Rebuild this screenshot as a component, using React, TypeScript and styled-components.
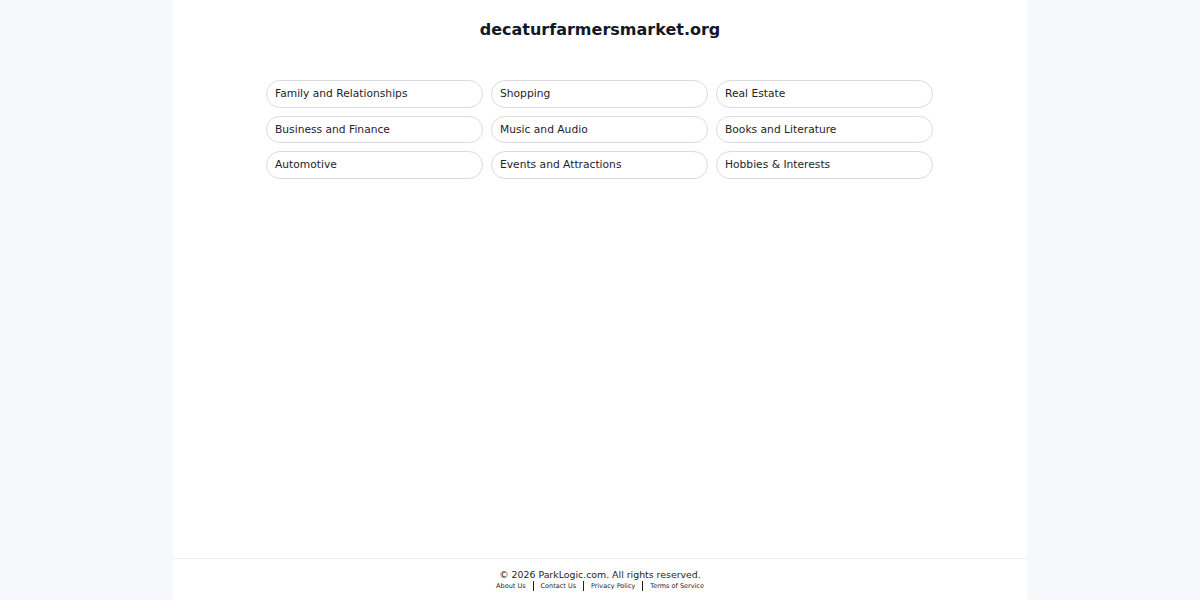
import React from "react";
import styled, { createGlobalStyle } from "styled-components";

const GlobalStyle = createGlobalStyle`
  html, body {
    margin: 0;
    padding: 0;
    background: #f7f8fc;
    font-family: "DejaVu Sans", "Liberation Sans", sans-serif;
    color: #111827;
  }
`;

const Page = styled.div`
  max-width: 854px;
  margin: 0 auto;
  min-height: 600px;
  background: #ffffff;
  display: flex;
  flex-direction: column;
`;

const Main = styled.main`
  flex: 1;
  display: flex;
  flex-direction: column;
  align-items: center;
`;

const Title = styled.h1`
  margin: 20px 0 0;
  font-size: 16px;
  line-height: 20px;
  font-weight: 700;
  color: #111827;
`;

const Grid = styled.div`
  align-self: flex-start;
  margin: 40px 0 0 93px;
  width: 667px;
  display: grid;
  grid-template-columns: repeat(3, 1fr);
  gap: 8px;
`;

const Chip = styled.a`
  display: flex;
  align-items: center;
  height: 27.5px;
  box-sizing: border-box;
  padding: 0 8px;
  border: 1px solid #d9dbe0;
  border-radius: 14px;
  font-size: 10.7px;
  color: #1f2328;
  text-decoration: none;
  cursor: pointer;
`;

const Footer = styled.footer`
  border-top: 1px solid #eceef1;
  padding: 10px 0 9px;
  display: flex;
  flex-direction: column;
  align-items: center;
`;

const Copy = styled.div`
  font-size: 9.4px;
  line-height: 12px;
  color: #1f2328;
`;

const Links = styled.nav`
  display: flex;
  align-items: center;
`;

const FooterLink = styled.a<{ $first?: boolean }>`
  font-size: 6.5px;
  line-height: 10px;
  color: #1f2328;
  text-decoration: none;
  padding: 0 7px;
  border-left: ${(p) => (p.$first ? "none" : "1px solid #222")};
`;

const categories = [
  "Family and Relationships",
  "Shopping",
  "Real Estate",
  "Business and Finance",
  "Music and Audio",
  "Books and Literature",
  "Automotive",
  "Events and Attractions",
  "Hobbies & Interests",
];

const footerLinks = ["About Us", "Contact Us", "Privacy Policy", "Terms of Service"];

export default function App() {
  return (
    <>
      <GlobalStyle />
      <Page>
        <Main>
          <Title>decaturfarmersmarket.org</Title>
          <Grid>
            {categories.map((c) => (
              <Chip key={c}>{c}</Chip>
            ))}
          </Grid>
        </Main>
        <Footer>
          <Copy>© 2026 ParkLogic.com. All rights reserved.</Copy>
          <Links>
            {footerLinks.map((l, i) => (
              <FooterLink key={l} $first={i === 0}>
                {l}
              </FooterLink>
            ))}
          </Links>
        </Footer>
      </Page>
    </>
  );
}
